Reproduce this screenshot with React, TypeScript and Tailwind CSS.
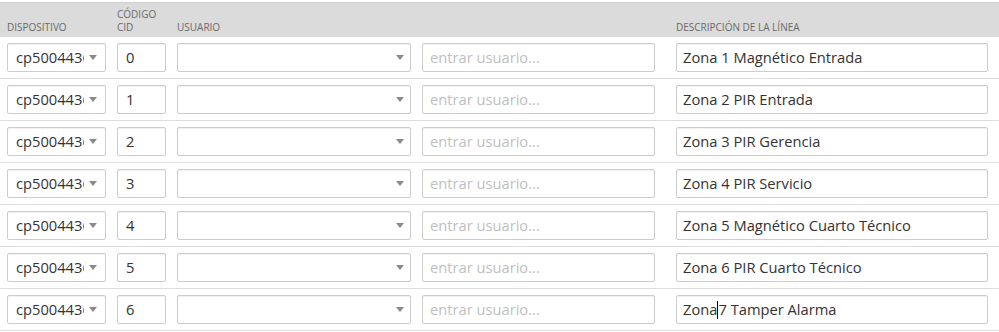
import React from 'react';

const filas = [
  { cid: '0', desc: 'Zona 1 Magnético Entrada' },
  { cid: '1', desc: 'Zona 2 PIR Entrada' },
  { cid: '2', desc: 'Zona 3 PIR Gerencia' },
  { cid: '3', desc: 'Zona 4 PIR Servicio' },
  { cid: '4', desc: 'Zona 5 Magnético Cuarto Técnico' },
  { cid: '5', desc: 'Zona 6 PIR Cuarto Técnico' },
  { cid: '6', desc: 'Zona 7 Tamper Alarma', foco: true },
];

const caja = 'h-[29px] border border-[#cccccc] rounded-[2px] bg-white shadow-[inset_0_1px_1px_rgba(0,0,0,0.06)] flex items-center';

function Flecha() {
  return (
    <svg width="8" height="5" viewBox="0 0 8 5" className="shrink-0">
      <path d="M0 0 L8 0 L4 5 Z" fill="#8a8a8a" />
    </svg>
  );
}

export default function App() {
  return (
    <div className="w-[999px] h-[332px] bg-white pt-[2px] text-[#333]" style={{ fontFamily: '"Open Sans", "Noto Sans", sans-serif' }}>
      {/* cabecera */}
      <div className="h-[35px] bg-[#dbdbdb] border-t border-[#cfcfcf] flex items-end pb-[3px] pl-[7px] text-[10px] leading-[13px] text-[#6a6a6a] uppercase">
        <div className="w-[110px]">Dispositivo</div>
        <div className="w-[60px]">Código<br />CID</div>
        <div className="w-[499px]">Usuario</div>
        <div>Descripción de la línea</div>
      </div>

      {filas.map((f) => (
        <div key={f.cid} className="h-[42px] border-b border-[#dddddd] flex items-center pl-[7px] gap-[11px] text-[14.7px]">
          <div className={`${caja} w-[99px] pl-[8px] pr-[8px] gap-[5px]`}>
            <span className="overflow-hidden whitespace-nowrap flex-1">cp5004436</span>
            <Flecha />
          </div>
          <div className={`${caja} w-[49px] pl-[8px]`}>{f.cid}</div>
          <div className={`${caja} w-[234px] justify-end pr-[6px]`}>
            <Flecha />
          </div>
          <div className={`${caja} w-[233px] pl-[7px] text-[#c0c0c0]`}>entrar usuario...</div>
          <div className={`${caja} w-[312px] ml-[10px] pl-[6px] whitespace-nowrap ${f.foco ? 'border-[#9ab7d6]' : ''}`}>
            {f.foco ? (
              <>
                Zona<span className="inline-block w-px h-[18px] bg-black" /> 7 Tamper Alarma
              </>
            ) : (
              f.desc
            )}
          </div>
        </div>
      ))}
    </div>
  );
}
